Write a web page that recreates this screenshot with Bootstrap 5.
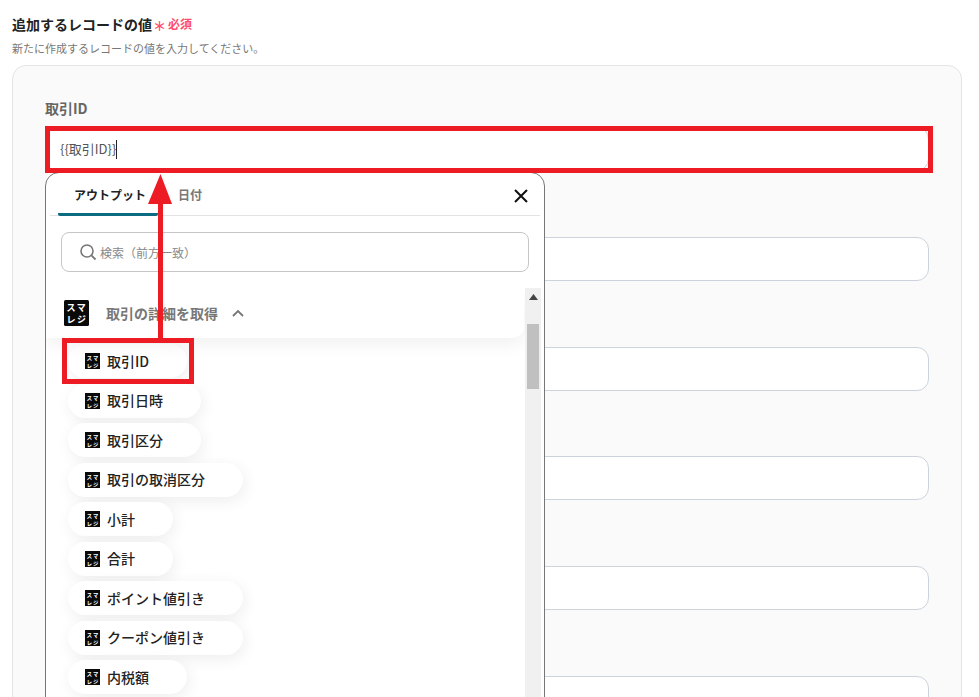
<!DOCTYPE html>
<html lang="ja">
<head>
<meta charset="utf-8">
<title>追加するレコードの値</title>
<link href="https://cdn.jsdelivr.net/npm/bootstrap@5.3.0/dist/css/bootstrap.min.css" rel="stylesheet">
<style>
html,body{height:697px;overflow:hidden;background:#fff}
body{font-family:"Noto Sans CJK JP","Noto Sans",sans-serif;color:#222;padding:14px 17px 0 12px;position:relative}
.sec-title{font-size:14px;font-weight:700;line-height:20px;color:#222}
.req{color:#ff4b6e;font-size:12px;font-weight:700}
.req-star{color:#ff4b6e;font-size:13px;font-weight:700;line-height:14px;margin:3px 2px 0 1px}
.sec-help{font-size:11px;line-height:16px;color:#777;margin-top:6px;margin-bottom:9px}
.panel-box{background:#fafafa;border:1px solid #e4e4e4;border-radius:14px;height:700px;padding:32px 32px 0 32px}
.field-wrap{margin-bottom:36.75px;position:relative}
.field-label{font-size:14px;font-weight:700;color:#666;line-height:20px;margin-bottom:9px;min-height:20px}
.field-box{height:44px;border:1px solid #ccd3dd;border-radius:12px;background:#fff;font-size:13px;line-height:42px;padding:0 14px;color:#555}
.caret-mark{display:inline-block;width:1px;height:19px;background:#222;vertical-align:-5px}
.picker{position:absolute;left:0;top:74px;width:500px;height:600px;background:#fff;border:1px solid #777;border-radius:14px;z-index:5}
.tab-row{height:43px;margin:0 4px;border-bottom:1px solid #e3e3e3;padding-left:8px}
.tab-item{font-size:12px;font-weight:700;line-height:18px;padding:13px 20px 0;height:43px;color:#777;white-space:nowrap}
.tab-item.on{color:#222;width:100px;padding-left:16px;padding-right:0;border-bottom:3px solid #0b6b80;border-radius:2px}
.close-x{margin-left:auto;margin-right:10px;margin-top:14px;width:18px;height:18px}
.search-box{height:40px;margin:16px 15px 16px 15px;border:1px solid #c6c6c6;border-radius:8px;padding-left:17px;font-size:12px;color:#888;gap:3px}
.search-text{margin-top:1px}
.list-zone{height:470px;overflow:hidden}
.list-main{width:479px;flex:none}
.group-head{height:50px;width:478px;background:#fff;border-radius:0 12px 12px 0;box-shadow:0 8px 16px rgba(0,0,0,.05);padding-left:18px;font-size:14px;font-weight:700;color:#777;position:relative}
.group-name{margin-left:17px;margin-right:14px}
.pill-list{padding:6px 0 0 22px}
.pill-item{height:34px;margin-bottom:5.55px;background:#fff;border-radius:17px;box-shadow:2px 4px 16px rgba(0,0,0,.07);padding:0 38px 0 17px;font-size:14px;font-weight:500;color:#222;width:max-content;gap:7px}
.track{width:16px;background:#f0f0f0;position:relative}
.track-up{display:block;margin:6px auto 0}
.track-thumb{width:12px;height:65px;background:#c0c0c0;margin:24px auto 0}
.mark-box{position:absolute;border:5px solid #ed1c24;z-index:6;pointer-events:none}
.mark-a{left:45px;top:126px;width:888px;height:47px}
.mark-b{left:62px;top:338px;width:132px;height:46px}
.mark-arrow{position:absolute;left:140px;top:170px;z-index:7}
.logo-big text{font-size:9px;font-weight:700;fill:#fff;letter-spacing:1.6px;text-anchor:middle}
.logo-small text{font-size:5.3px;font-weight:700;fill:#fff;letter-spacing:1px;text-anchor:middle}
</style>
</head>
<body>
<div class="d-flex align-items-center sec-title">追加するレコードの値<span class="req-star">＊</span><span class="req">必須</span></div>
<div class="sec-help">新たに作成するレコードの値を入力してください。</div>

<div class="panel-box">
  <div class="field-wrap">
    <div class="field-label">取引ID</div>
    <div class="field-box">{{取引ID}}<span class="caret-mark"></span></div>

    <div class="picker d-flex flex-column">
      <div class="d-flex tab-row">
        <div class="tab-item on">アウトプット</div>
        <div class="tab-item">日付</div>
        <svg class="close-x" viewBox="0 0 18 18"><path d="M3 3 L15 15 M15 3 L3 15" stroke="#111" stroke-width="2" fill="none"/></svg>
      </div>
      <div class="search-box d-flex align-items-center">
        <svg width="18" height="18" viewBox="0 0 18 18"><circle cx="8" cy="8" r="6" stroke="#777" stroke-width="1.6" fill="none"/><path d="M12.4 12.4 L16.5 16.5" stroke="#777" stroke-width="1.8"/></svg>
        <span class="search-text">検索（前方一致）</span>
      </div>
      <div class="d-flex list-zone">
        <div class="list-main">
          <div class="group-head d-flex align-items-center">
            <svg class="logo-big" width="25" height="26" viewBox="0 0 25 26"><rect width="25" height="26" rx="1.5" fill="#0a0a0a"/><text x="13" y="11">スマ</text><text x="13" y="23">レジ</text></svg>
            <span class="group-name">取引の詳細を取得</span>
            <svg width="12" height="8" viewBox="0 0 12 8"><path d="M1 7 L6 2 L11 7" stroke="#777" stroke-width="1.8" fill="none"/></svg>
          </div>
          <div class="pill-list">
            <div class="pill-item d-flex align-items-center"><svg class="logo-small" width="15" height="16" viewBox="0 0 15 16"><rect width="15" height="16" fill="#0a0a0a"/><text x="8" y="7">スマ</text><text x="8" y="14.5">レジ</text></svg><span>取引ID</span></div>
            <div class="pill-item d-flex align-items-center"><svg class="logo-small" width="15" height="16" viewBox="0 0 15 16"><rect width="15" height="16" fill="#0a0a0a"/><text x="8" y="7">スマ</text><text x="8" y="14.5">レジ</text></svg><span>取引日時</span></div>
            <div class="pill-item d-flex align-items-center"><svg class="logo-small" width="15" height="16" viewBox="0 0 15 16"><rect width="15" height="16" fill="#0a0a0a"/><text x="8" y="7">スマ</text><text x="8" y="14.5">レジ</text></svg><span>取引区分</span></div>
            <div class="pill-item d-flex align-items-center"><svg class="logo-small" width="15" height="16" viewBox="0 0 15 16"><rect width="15" height="16" fill="#0a0a0a"/><text x="8" y="7">スマ</text><text x="8" y="14.5">レジ</text></svg><span>取引の取消区分</span></div>
            <div class="pill-item d-flex align-items-center"><svg class="logo-small" width="15" height="16" viewBox="0 0 15 16"><rect width="15" height="16" fill="#0a0a0a"/><text x="8" y="7">スマ</text><text x="8" y="14.5">レジ</text></svg><span>小計</span></div>
            <div class="pill-item d-flex align-items-center"><svg class="logo-small" width="15" height="16" viewBox="0 0 15 16"><rect width="15" height="16" fill="#0a0a0a"/><text x="8" y="7">スマ</text><text x="8" y="14.5">レジ</text></svg><span>合計</span></div>
            <div class="pill-item d-flex align-items-center"><svg class="logo-small" width="15" height="16" viewBox="0 0 15 16"><rect width="15" height="16" fill="#0a0a0a"/><text x="8" y="7">スマ</text><text x="8" y="14.5">レジ</text></svg><span>ポイント値引き</span></div>
            <div class="pill-item d-flex align-items-center"><svg class="logo-small" width="15" height="16" viewBox="0 0 15 16"><rect width="15" height="16" fill="#0a0a0a"/><text x="8" y="7">スマ</text><text x="8" y="14.5">レジ</text></svg><span>クーポン値引き</span></div>
            <div class="pill-item d-flex align-items-center"><svg class="logo-small" width="15" height="16" viewBox="0 0 15 16"><rect width="15" height="16" fill="#0a0a0a"/><text x="8" y="7">スマ</text><text x="8" y="14.5">レジ</text></svg><span>内税額</span></div>
          </div>
        </div>
        <div class="track">
          <svg class="track-up" width="9" height="6" viewBox="0 0 9 6"><path d="M4.5 0 L9 6 L0 6 Z" fill="#444"/></svg>
          <div class="track-thumb"></div>
        </div>
      </div>
    </div>
  </div>
  <div class="field-wrap"><div class="field-label">&nbsp;</div><div class="field-box"></div></div>
  <div class="field-wrap"><div class="field-label">&nbsp;</div><div class="field-box"></div></div>
  <div class="field-wrap"><div class="field-label">&nbsp;</div><div class="field-box"></div></div>
  <div class="field-wrap"><div class="field-label">&nbsp;</div><div class="field-box"></div></div>
  <div class="field-wrap"><div class="field-label">&nbsp;</div><div class="field-box"></div></div>
</div>

<div class="mark-box mark-a"></div>
<div class="mark-box mark-b"></div>
<svg class="mark-arrow" width="40" height="170" viewBox="0 0 40 170"><rect x="18" y="34" width="5" height="136" fill="#ed1c24"/><path d="M20.5 4 L32 34 L8 34 Z" fill="#ed1c24"/></svg>
</body>
</html>
